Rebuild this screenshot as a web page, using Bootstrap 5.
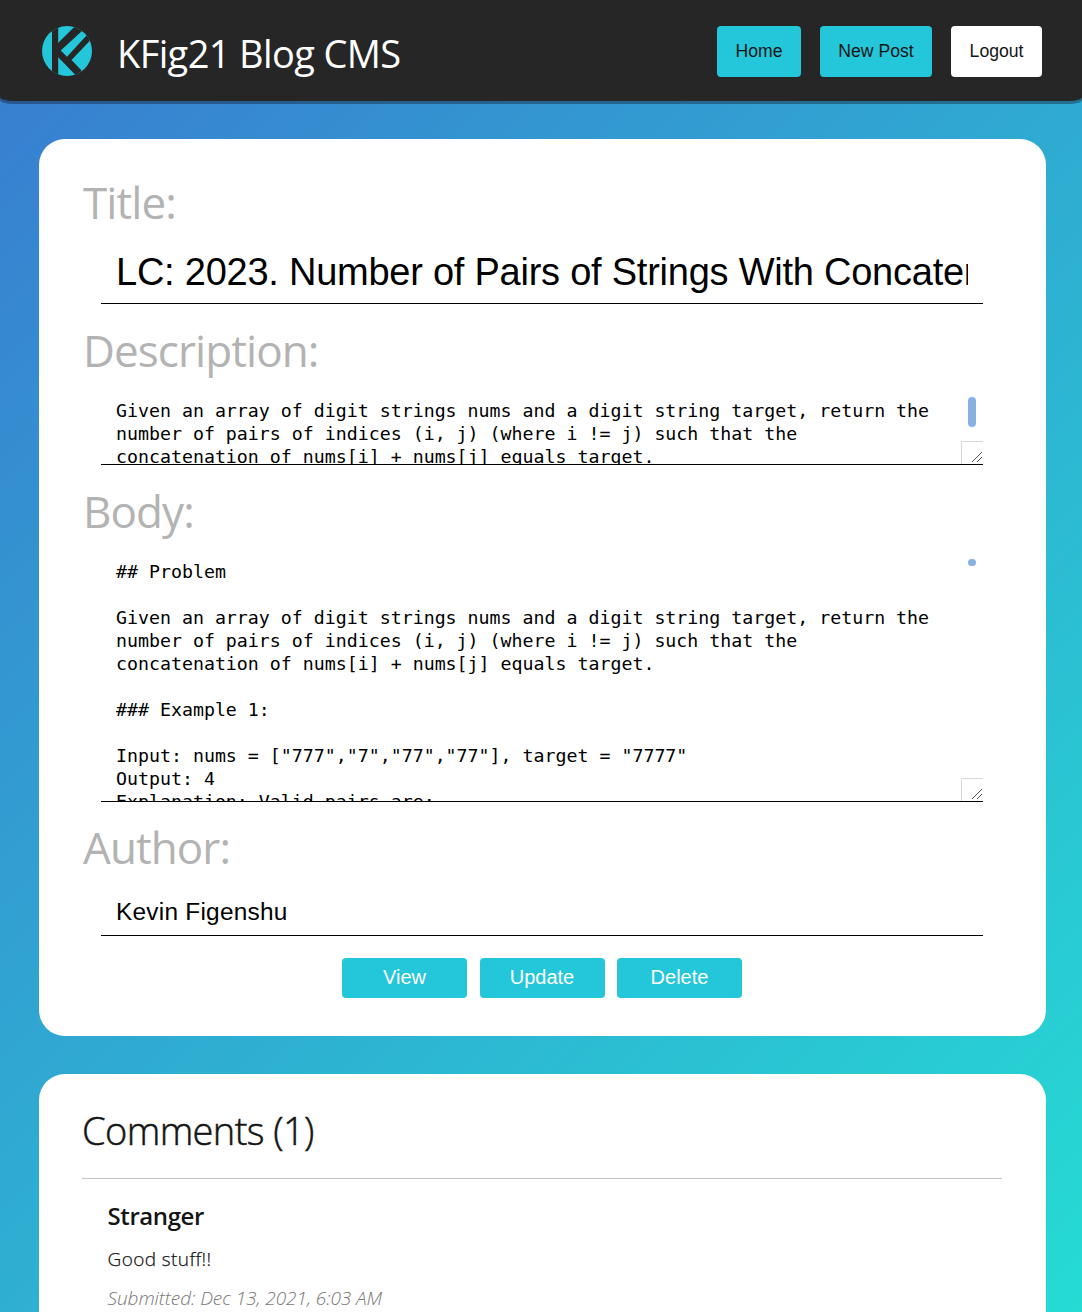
<!DOCTYPE html>
<html lang="en">
<head>
<meta charset="utf-8">
<meta name="viewport" content="width=device-width, initial-scale=1">
<title>KFig21 Blog CMS</title>
<link href="https://cdn.jsdelivr.net/npm/bootstrap@5.3.0/dist/css/bootstrap.min.css" rel="stylesheet">
<style>
body{height:1312px;overflow:hidden;font-family:"Open Sans","Noto Sans",sans-serif;color:#151515;background:linear-gradient(135deg,#397bd0,#25dbd4)}
.topbar{height:101px;background:#262626;border-radius:0 0 13px 13px/0 0 4px 4px;box-shadow:0 3px 0 rgba(20,30,50,.42);padding:0 40px 0 42px}
.brand-name{font-size:38px;line-height:50px;color:#fff;letter-spacing:-.62px;margin-left:25px;padding-top:5px}
.btn{--bs-btn-border-width:0;--bs-btn-border-radius:4px;font-family:"Liberation Sans",Arial,sans-serif;padding:0}
.btn-cy{--bs-btn-bg:#24c6da;--bs-btn-hover-bg:#1fb5c8;background:#24c6da}
.nav-set{gap:19px;padding-top:2px}
.nav-act{height:51px;font-size:17.6px;color:#151515}
.w-home{width:84px}.w-new{width:112px}.w-out{width:91px}
.form-act{width:125px;height:40px;font-size:20px;color:#fff;padding-bottom:2px}
.panel{margin:38px 36.5px 0 39px;border-radius:26px;background:#fff}
.panel-form{height:896.5px;padding:33px 62.5px 0 62px}
.panel-comments{height:238.5px;border-radius:26px 26px 0 0;padding:31.5px 43.5px 0 43px}
.fld-label{font-size:44px;line-height:60px;height:60px;letter-spacing:-.92px;color:#b3b3b3;margin:0 0 0 -18px;display:block;white-space:nowrap}
.fld{border:0;border-bottom:1px solid #000;border-radius:0;color:#000;background:#fff;padding:0 15px;font-family:"Liberation Sans",Arial,sans-serif;width:100%;display:block;outline:0}
.fld-title{height:64px;font-size:38px;letter-spacing:-.24px;margin:8px 0 16px;padding-top:2px}
.fld-author{height:49px;font-size:24.4px;letter-spacing:.25px;margin:10px 0 22px;padding-top:1px}
.area{font:18.25px/23px "DejaVu Sans Mono",monospace;padding:9px 15px 0;resize:none;overflow:hidden;white-space:pre}
.area-desc{height:75px}.area-body{height:251px}
.wrap-desc{margin:10px 0 16px}.wrap-body{margin:10px 0 15px}
.thumb{position:absolute;right:7px;top:7px;width:8px;height:30px;border-radius:4px;background:#88b1e2}
.thumb-sm{top:8px;height:7px}
.grip{position:absolute;right:0;bottom:1px;background:#fff}
.cm-head{font-size:38px;line-height:50px;font-weight:300;-webkit-text-stroke:.5px #151515;letter-spacing:-.6px;margin:0}
.cm-rule{height:1px;background:#c4c4c4;margin:23px 0 20px}
.cm-item{padding-left:25.500px}
.cm-name{font-size:24px;line-height:34px;font-weight:600;letter-spacing:-.4px}
.cm-text{font-size:19px;line-height:26px;margin-top:13px;font-weight:300;-webkit-text-stroke:.25px #151515;letter-spacing:.4px}
.cm-date{font-size:19px;line-height:26px;margin-top:13px;font-style:italic;font-weight:300;letter-spacing:-.05px;color:#777}
</style>
</head>
<body>
<header class="topbar d-flex align-items-center justify-content-between">
  <div class="d-flex align-items-center">
    <svg width="50" height="50" viewBox="0 0 50 50" aria-hidden="true">
      <defs><clipPath id="disc"><circle cx="25" cy="25" r="25"/></clipPath></defs>
      <g clip-path="url(#disc)">
        <rect width="50" height="50" fill="#24c6da"/>
        <path d="M10 0h6.200v50H10z" fill="#262626"/>
        <path d="M16 17 32.500 .8V-2H44V1L39.700 5.300 18.700 24.500 25 30.700 44.500 9.500 50 6V12.500L29.500 34 39.500 44.500 35 50.500 16 31z" fill="#262626"/>
      </g>
    </svg>
    <div class="brand-name">KFig21 Blog CMS</div>
  </div>
  <nav class="d-flex nav-set">
    <button class="btn btn-cy nav-act w-home">Home</button>
    <button class="btn btn-cy nav-act w-new">New Post</button>
    <button class="btn bg-white nav-act w-out">Logout</button>
  </nav>
</header>
<main>
  <form class="panel panel-form">
    <label class="fld-label" for="t">Title:</label>
    <input class="fld fld-title" id="t" value="LC: 2023. Number of Pairs of Strings With Concatenation Equal to Target">
    <label class="fld-label" for="d">Description:</label>
    <div class="wrap-desc position-relative">
      <textarea class="fld area area-desc" id="d">Given an array of digit strings nums and a digit string target, return the
number of pairs of indices (i, j) (where i != j) such that the
concatenation of nums[i] + nums[j] equals target.</textarea>
      <span class="thumb"></span>
      <svg class="grip" width="22" height="23"><path d="M.5 23V.5H22" fill="none" stroke="#d9d9d9"/><path d="M11 21 21 11M16 21l5-5" stroke="#555" fill="none"/></svg>
    </div>
    <label class="fld-label" for="b">Body:</label>
    <div class="wrap-body position-relative">
      <textarea class="fld area area-body" id="b">## Problem

Given an array of digit strings nums and a digit string target, return the
number of pairs of indices (i, j) (where i != j) such that the
concatenation of nums[i] + nums[j] equals target.

### Example 1:

Input: nums = ["777","7","77","77"], target = "7777"
Output: 4
Explanation: Valid pairs are:</textarea>
      <span class="thumb thumb-sm"></span>
      <svg class="grip" width="22" height="23"><path d="M.5 23V.5H22" fill="none" stroke="#d9d9d9"/><path d="M11 21 21 11M16 21l5-5" stroke="#555" fill="none"/></svg>
    </div>
    <label class="fld-label" for="a">Author:</label>
    <input class="fld fld-author" id="a" value="Kevin Figenshu">
    <div class="d-flex justify-content-center" style="gap:12.5px">
      <button type="button" class="btn btn-cy form-act">View</button>
      <button type="button" class="btn btn-cy form-act">Update</button>
      <button type="button" class="btn btn-cy form-act">Delete</button>
    </div>
  </form>
  <section class="panel panel-comments">
    <h2 class="cm-head">Comments (1)</h2>
    <div class="cm-rule"></div>
    <article class="cm-item">
      <div class="cm-name">Stranger</div>
      <div class="cm-text">Good stuff!!</div>
      <div class="cm-date">Submitted: Dec 13, 2021, 6:03 AM</div>
    </article>
  </section>
</main>
<script src="https://cdn.jsdelivr.net/npm/bootstrap@5.3.0/dist/js/bootstrap.bundle.min.js"></script>
</body>
</html>
